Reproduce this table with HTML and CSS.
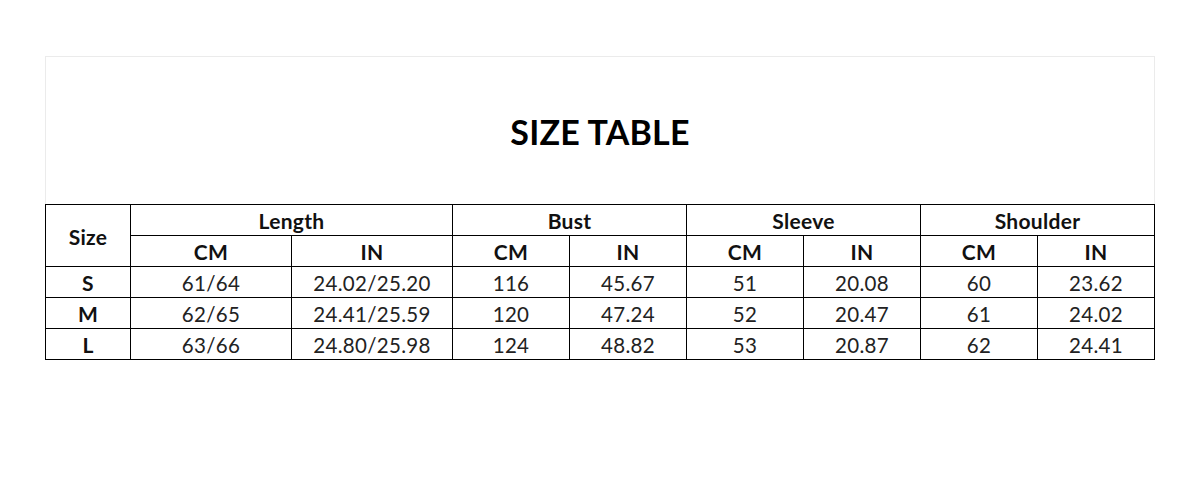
FILE: index.html
```html
<!DOCTYPE html>
<html>
<head>
<meta charset="utf-8">
<link rel="stylesheet" href="styles.css">
</head>
<body>
<div class="sheet">
  <div class="title-box"><h1 class="title">SIZE TABLE</h1></div>
  <table class="size-table">
    <colgroup>
      <col class="c-size"><col class="c-wide"><col class="c-wide">
      <col class="c-std"><col class="c-std"><col class="c-std"><col class="c-std"><col class="c-std"><col class="c-std">
    </colgroup>
    <thead>
      <tr>
        <th rowspan="2">Size</th>
        <th colspan="2">Length</th>
        <th colspan="2">Bust</th>
        <th colspan="2">Sleeve</th>
        <th colspan="2">Shoulder</th>
      </tr>
      <tr>
        <th>CM</th><th>IN</th><th>CM</th><th>IN</th><th>CM</th><th>IN</th><th>CM</th><th>IN</th>
      </tr>
    </thead>
    <tbody>
      <tr><th>S</th><td>61/64</td><td>24.02/25.20</td><td>116</td><td>45.67</td><td>51</td><td>20.08</td><td>60</td><td>23.62</td></tr>
      <tr><th>M</th><td>62/65</td><td>24.41/25.59</td><td>120</td><td>47.24</td><td>52</td><td>20.47</td><td>61</td><td>24.02</td></tr>
      <tr><th>L</th><td>63/66</td><td>24.80/25.98</td><td>124</td><td>48.82</td><td>53</td><td>20.87</td><td>62</td><td>24.41</td></tr>
    </tbody>
  </table>
</div>
</body>
</html>
```

FILE: styles.css
```css
html, body {
  margin: 0;
  padding: 0;
  background: #fff;
}
body {
  font-family: "Lato", "Open Sans", "Liberation Sans", sans-serif;
  color: #111;
}
.sheet {
  width: 1110px;
  padding: 56px 0 0 45px;
}
.title-box {
  height: 148px;
  border: 1px solid #ebebeb;
  border-bottom: none;
  display: flex;
  align-items: center;
  justify-content: center;
  box-sizing: border-box;
}
.title {
  margin: 2px 0 0 0;
  font-size: 34px;
  font-weight: 700;
  letter-spacing: 0.2px;
  color: #000;
}
.size-table {
  width: 1110px;
  border-collapse: collapse;
  table-layout: fixed;
  font-size: 20.5px;
}
.c-size { width: 85px; }
.c-wide { width: 161px; }
.c-std { width: 117px; }
.size-table th,
.size-table td {
  border: 1px solid #000;
  height: 28px;
  padding: 2px 0 0 0;
  text-align: center;
  vertical-align: middle;
  line-height: 28px;
}
.size-table th {
  font-weight: 700;
  font-size: 21px;
  letter-spacing: 0.3px;
}
.size-table td {
  font-weight: 400;
  color: #222;
  letter-spacing: 0.3px;
}
```
